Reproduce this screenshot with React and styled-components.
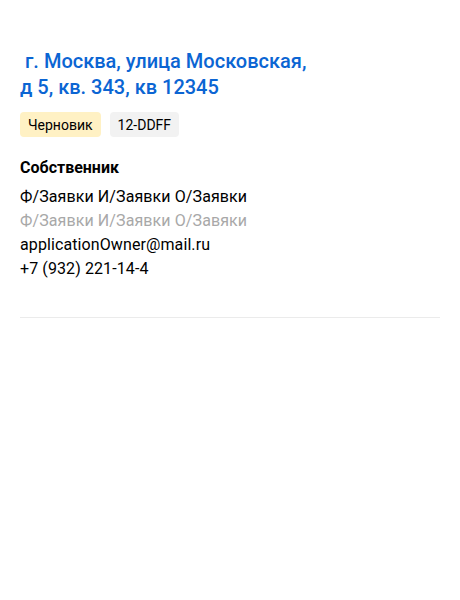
import styled, { createGlobalStyle } from "styled-components";

const GlobalStyle = createGlobalStyle`
	body {
		margin: 0;
		background: #fff;
		font-family: Roboto, "Liberation Sans", sans-serif;
		color: #000;
	}
`;

const Page = styled.div`
	padding: 48px 20px 0;
`;

const Title = styled.h1`
	margin: 0;
	font-size: 20px;
	line-height: 26px;
	font-weight: 500;
	color: #0b65d3;
	white-space: pre-wrap;
`;

const Tags = styled.div`
	display: flex;
	gap: 9px;
	margin-top: 12px;
`;

const Tag = styled.span`
	display: inline-flex;
	align-items: center;
	height: 25px;
	padding: 0 8px;
	border-radius: 4px;
	font-size: 14px;
	background: ${({ $tone }) => ($tone === "draft" ? "#fff1c4" : "#f2f2f2")};
`;

const Section = styled.section`
	margin-top: 19px;
	padding-bottom: 36px;
	border-bottom: 1px solid #ebebeb;
`;

const SectionTitle = styled.h2`
	margin: 0 0 5px;
	font-size: 16px;
	line-height: 24px;
	font-weight: 700;
`;

const Line = styled.div`
	font-size: 16px;
	line-height: 24px;
	letter-spacing: 0.1px;
	color: ${({ $muted }) => ($muted ? "#a8a8a8" : "#000")};
`;

const App = () => {
	return (
		<>
			<GlobalStyle />
			<Page>
				<Title>
					{" г. Москва, улица Московская,"}
					<br />
					{"д 5, кв. 343, кв 12345"}
				</Title>
				<Tags>
					<Tag $tone="draft">Черновик</Tag>
					<Tag>12-DDFF</Tag>
				</Tags>
				<Section>
					<SectionTitle>Собственник</SectionTitle>
					<Line>Ф/Заявки И/Заявки О/Заявки</Line>
					<Line $muted>Ф/Заявки И/Заявки О/Завяки</Line>
					<Line>applicationOwner@mail.ru</Line>
					<Line>+7 (932) 221-14-4</Line>
				</Section>
			</Page>
		</>
	);
};

export default App;
